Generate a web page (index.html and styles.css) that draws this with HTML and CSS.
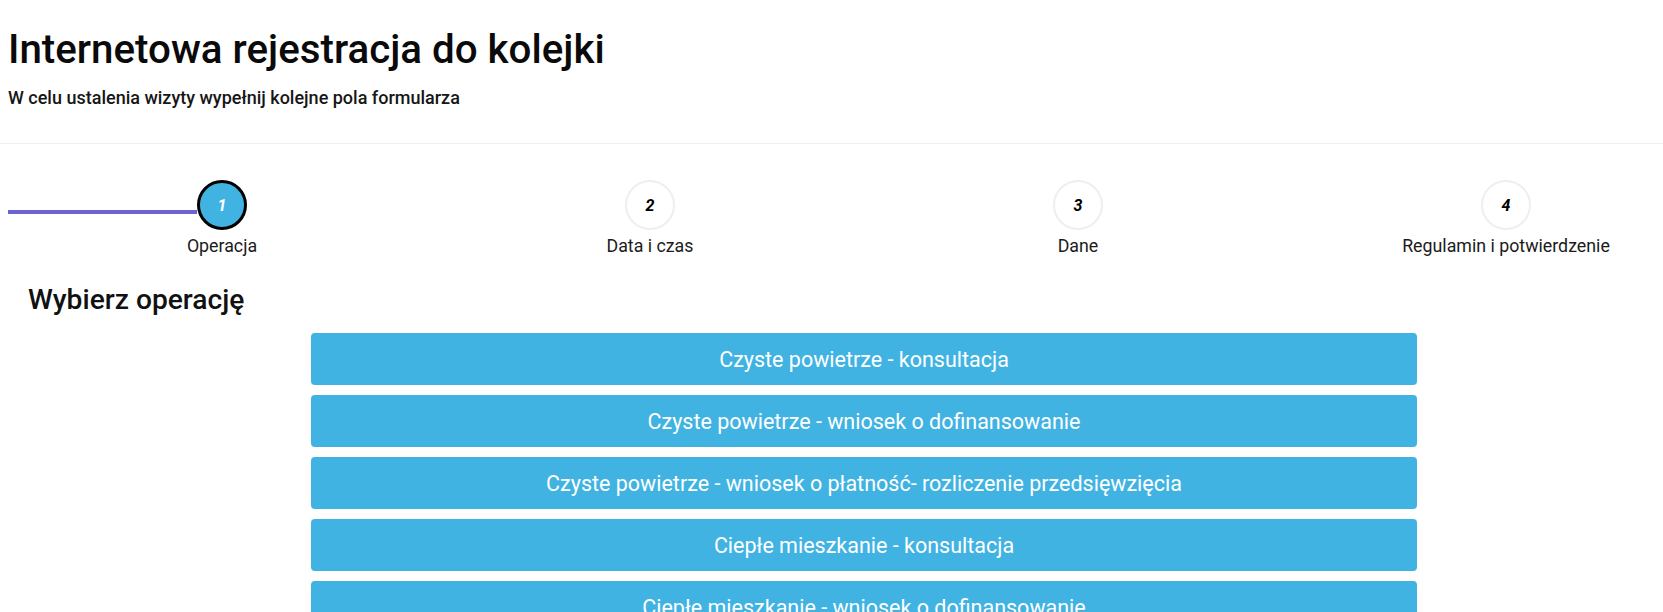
FILE: index.html
```html
<!DOCTYPE html>
<html lang="pl">
<head>
    <meta charset="UTF-8">
    <meta name="viewport" content="width=device-width, initial-scale=1.0">
    <title>Internetowa rejestracja do kolejki</title>
    <link rel="stylesheet" href="styles.css">
</head>
<body>
    <header class="page-header">
        <h1>Internetowa rejestracja do kolejki</h1>
        <p class="lead">W celu ustalenia wizyty wypełnij kolejne pola formularza</p>
    </header>

    <main class="page">
        <ol class="stepper">
            <li class="step active">
                <div class="step-head">
                    <span class="step-line done"></span>
                    <span class="step-circle">1</span>
                    <span class="step-line"></span>
                </div>
                <span class="step-label">Operacja</span>
            </li>
            <li class="step">
                <div class="step-head">
                    <span class="step-line"></span>
                    <span class="step-circle">2</span>
                    <span class="step-line"></span>
                </div>
                <span class="step-label">Data i czas</span>
            </li>
            <li class="step">
                <div class="step-head">
                    <span class="step-line"></span>
                    <span class="step-circle">3</span>
                    <span class="step-line"></span>
                </div>
                <span class="step-label">Dane</span>
            </li>
            <li class="step">
                <div class="step-head">
                    <span class="step-line"></span>
                    <span class="step-circle">4</span>
                    <span class="step-line"></span>
                </div>
                <span class="step-label">Regulamin i potwierdzenie</span>
            </li>
        </ol>

        <h2 class="section-title">Wybierz operację</h2>

        <div class="operations">
            <button type="button" class="operation">Czyste powietrze - konsultacja</button>
            <button type="button" class="operation">Czyste powietrze - wniosek o dofinansowanie</button>
            <button type="button" class="operation">Czyste powietrze - wniosek o płatność- rozliczenie przedsięwzięcia</button>
            <button type="button" class="operation">Ciepłe mieszkanie - konsultacja</button>
            <button type="button" class="operation">Ciepłe mieszkanie - wniosek o dofinansowanie</button>
        </div>
    </main>
</body>
</html>
```

FILE: styles.css
```css
html, body {
    overflow: hidden;
}

body {
    margin: 0;
    background-color: #ffffff;
    color: #111111;
    font-family: Roboto, 'Liberation Sans', sans-serif;
}

.page-header {
    width: 1712px;
    padding: 26px 8px 32px;
    border-bottom: 1px solid #efefef;
}

.page-header h1 {
    margin: 0;
    font-size: 40.3px;
    font-weight: 500;
    line-height: 48px;
    color: #0a0a0a;
}

.page-header .lead {
    margin: 10px 0 0;
    font-size: 18px;
    font-weight: 500;
    line-height: 27px;
    color: #161616;
}

.page {
    width: 1712px;
    padding: 0 8px;
}

.stepper {
    display: flex;
    list-style: none;
    margin: 36px 0 0;
    padding: 0;
}

.step {
    flex: 1;
    display: flex;
    flex-direction: column;
    align-items: center;
}

.step-head {
    display: flex;
    align-items: center;
    width: 100%;
}

.step-line {
    flex: 1;
    height: 4px;
    margin-top: 14px;
}

.step-line.done {
    background-color: #6a62d6;
}

.step-circle {
    box-sizing: border-box;
    width: 50px;
    height: 50px;
    border: 2px solid #efefef;
    border-radius: 50%;
    background-color: #ffffff;
    display: flex;
    justify-content: center;
    align-items: center;
    font-size: 16px;
    font-weight: 700;
    font-style: italic;
    color: #000000;
}

.step.active .step-circle {
    border: 3px solid #000000;
    background-color: #41b3e3;
    color: #ffffff;
}

.step-label {
    margin-top: 2px;
    font-size: 17.8px;
    line-height: 27px;
    color: #1b1b1b;
}

.section-title {
    margin: 24px 0 0 20px;
    font-size: 28.2px;
    font-weight: 500;
    line-height: 34px;
    color: #111111;
}

.operations {
    display: flex;
    flex-direction: column;
    gap: 10px;
    width: 1106px;
    margin: 16px auto 0;
}

.operation {
    height: 52px;
    border: none;
    border-radius: 4px;
    background-color: #41b3e3;
    color: #ffffff;
    font-family: Roboto, 'Liberation Sans', sans-serif;
    font-size: 21.5px;
    cursor: pointer;
}
```
